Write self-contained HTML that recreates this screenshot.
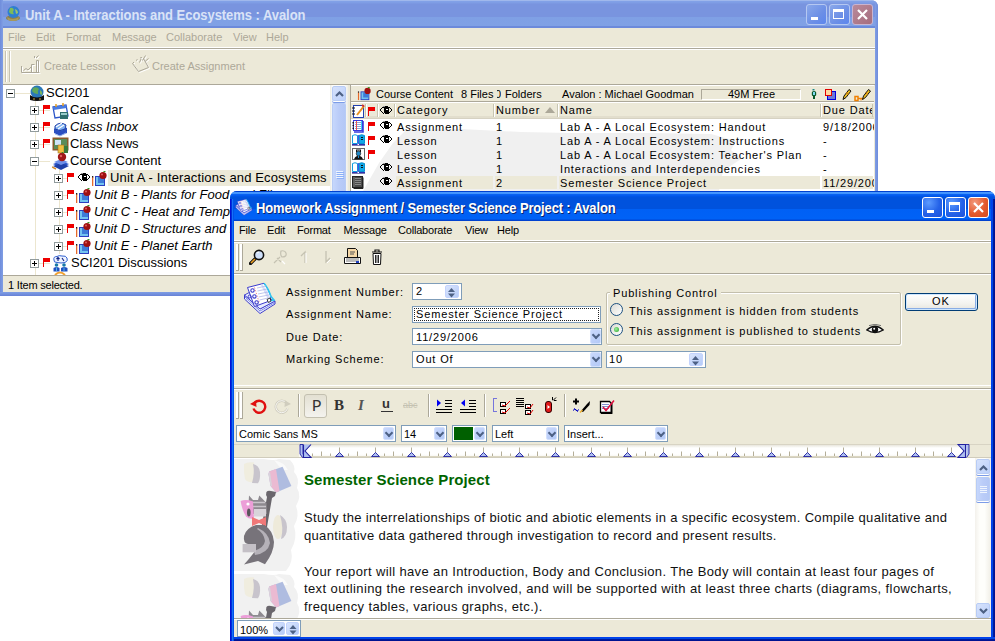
<!DOCTYPE html>
<html><head><meta charset="utf-8">
<style>
*{margin:0;padding:0;box-sizing:border-box}
html,body{width:995px;height:641px;overflow:hidden;background:#fff;font-family:"Liberation Sans",sans-serif;color:#000}
.a{position:absolute}
.nw{white-space:nowrap}
.t11{font-size:11px;line-height:13px}
.t13{font-size:13px;line-height:15px}
.beige{background:#ECE9D8}
.tbtn{position:absolute;width:21px;height:21px;border-radius:3px;border:1px solid #fff}
.sbtn{position:absolute;border-radius:2px;border:1px solid #B8CCF5;background:linear-gradient(135deg,#D6E2FC,#BCD0FA)}
.combo{position:absolute;background:#fff;border:1px solid #7F9DB9}
.dd{position:absolute;top:1px;right:1px;bottom:1px;width:11px;border-radius:2px;background:linear-gradient(135deg,#C9D8FC,#B3C9F7);border:1px solid #D3E0FD}
.dd:after{content:"";position:absolute;left:1.8px;top:1.8px;width:4px;height:4px;border-right:2.4px solid #4D6185;border-bottom:2.4px solid #4D6185;transform:rotate(45deg)}
.flag{position:absolute;width:8px;height:10px}
.flag:before{content:"";position:absolute;left:1px;top:1px;width:1px;height:9px;background:#E00}
.flag:after{content:"";position:absolute;left:1px;top:1px;width:7px;height:4px;background:#E00}
.xb{position:absolute;width:9px;height:9px;border:1px solid #919B9C;background:#fff}
.xb:before{content:"";position:absolute;left:1px;top:3px;width:5px;height:1px;background:#000}
.xb.p:after{content:"";position:absolute;left:3px;top:1px;width:1px;height:5px;background:#000}
</style></head><body>

<!-- ============ BACKGROUND WINDOW ============ -->
<div class="a" id="w1" style="left:0;top:0;width:878px;height:296px;background:#7A96DF;border-radius:0 7px 0 0;overflow:hidden">
  <div class="a" style="left:0;top:0;width:878px;height:28px;background:linear-gradient(to bottom,#A0B8EC 0,#A0B8EC 1px,#82A2E8 1px,#7E9CE4 3px,#7994DF 4px,#7994DF 17px,#7FA0E5 17px,#80A1E5 25.5px,#6C8ADB 26px,#6C8ADB 28px)"></div>
  <div class="a" style="left:0;top:0;width:3px;height:296px;background:linear-gradient(to right,#6F8CDB,#809EE4)"></div>
  <div class="a" style="left:875px;top:0;width:3px;height:296px;background:linear-gradient(to right,#809EE4,#6F8CDB)"></div>
  
  <!-- title icon globe -->
  <svg class="a" style="left:4px;top:4px" width="18" height="18" viewBox="0 0 18 18">
    <ellipse cx="9" cy="14" rx="7" ry="3" fill="#8C7E4E"/>
    <circle cx="9.5" cy="8" r="6" fill="#2F7FD0"/>
    <path d="M6 4 Q9 3 10 6 Q8 8 10 10 Q7 11 5 8Z" fill="#7DBB5A"/>
    <path d="M11 5 Q14 6 14 9 L12 10Z" fill="#9CC46A"/>
    <path d="M3 13 Q9 17 15 13 L14 16 Q9 18 4 16Z" fill="#A89B5E"/>
  </svg>
  <div class="a nw" style="left:25px;top:8px;font-weight:bold;font-size:13px;line-height:16px;color:#D9E3F7;letter-spacing:-0.05px;transform:scaleY(1.1);transform-origin:0 12px">Unit A - Interactions and Ecosystems : Avalon</div>
  <div class="tbtn" style="left:806px;top:4px;background:linear-gradient(135deg,#8AA8EA,#6C8FE6 60%,#5C86EE);border-color:#B5C8F2"><div class="a" style="left:4px;top:12px;width:7px;height:3px;background:#fff"></div></div>
  <div class="tbtn" style="left:829px;top:4px;background:linear-gradient(135deg,#8AA8EA,#6C8FE6 60%,#5C86EE);border-color:#B5C8F2"><div class="a" style="left:3px;top:4px;width:11px;height:10px;border:1px solid #fff;border-top-width:3px"></div></div>
  <div class="tbtn" style="left:852px;top:4px;background:linear-gradient(135deg,#B98A9A,#A66D7E);border-color:#C9B4CF">
    <svg class="a" style="left:3px;top:3px" width="13" height="13"><path d="M2 2L11 11M11 2L2 11" stroke="#fff" stroke-width="2.2"/></svg></div>
  <!-- client -->
  <div class="a beige" style="left:3px;top:28px;width:872px;height:264px">
    <!-- menu -->
    <div class="a nw t11" style="left:0;top:3px;width:872px;color:#ACA899">
      <span class="a" style="left:5px">File</span><span class="a" style="left:33px">Edit</span><span class="a" style="left:63px">Format</span><span class="a" style="left:109px">Message</span><span class="a" style="left:163px">Collaborate</span><span class="a" style="left:230px">View</span><span class="a" style="left:263px">Help</span>
    </div>
    <div class="a" style="left:0;top:19px;width:872px;height:1px;background:#fff"></div>
    <div class="a" style="left:0;top:20px;width:872px;height:1px;background:#ACA899"></div>
    <div class="a" style="left:0;top:21px;width:872px;height:1px;background:#fff"></div>
    <!-- toolbar -->
    <div class="a" style="left:2px;top:23px;width:2px;height:31px;border-left:1px solid #C5C2B2;background:#fff"></div>
    <div class="a" style="left:6px;top:23px;width:2px;height:31px;border-left:1px solid #C5C2B2;background:#fff"></div>
    <svg class="a" style="left:17px;top:27px" width="22" height="21" viewBox="0 0 22 21" fill="none"><path d="M1.5 17.5H19.5M1.5 11V17.5M3.5 15.5L6 13.5L8 15L11 12M11.5 17.5V9.5H14.5M16.5 17.5V5.5H18.5V17.5M16 3L18.5 0.5M14.5 1V3" stroke="#fff" stroke-width="1" transform="translate(1,1)"/><path d="M1.5 17.5H19.5M1.5 11V17.5M3.5 15.5L6 13.5L8 15L11 12M11.5 17.5V9.5H14.5M16.5 17.5V5.5H18.5V17.5M16 3L18.5 0.5M14.5 1V3" stroke="#ACA899" stroke-width="1"/></svg>
      <path d="M2 18H20M2 12V18M5 14L8 11L10 15L13 9M14 4V18H19V6M16 2L18 4" /></svg>
    <div class="a nw t11" style="left:41px;top:32px;color:#ACA899;font-size:11px">Create Lesson</div>
    <svg class="a" style="left:127px;top:27px" width="22" height="21" viewBox="0 0 22 21" fill="none"><path d="M2.5 8.5L8.5 16.5L18.5 12.5L13.5 3.5M2.5 8.5L4 7M6 5.5L7.5 4.5M10 3L12 2.5M12.5 5.5L15.5 0.5M15 6.5L18.5 3.5M9.5 7.5L11 4" stroke="#fff" stroke-width="1" transform="translate(1,1)"/><path d="M2.5 8.5L8.5 16.5L18.5 12.5L13.5 3.5M2.5 8.5L4 7M6 5.5L7.5 4.5M10 3L12 2.5M12.5 5.5L15.5 0.5M15 6.5L18.5 3.5M9.5 7.5L11 4" stroke="#ACA899" stroke-width="1"/></svg>
      <path d="M2 10L12 2L20 12L10 19Z M6 7L12 13 M9 5L15 11 M15 3L17 1 M18 5L20 4" /></svg>
    <div class="a nw t11" style="left:149px;top:32px;color:#ACA899;font-size:11px">Create Assignment</div>
    <div class="a" style="left:0;top:56px;width:872px;height:1px;background:#ACA899"></div>
    <!-- status -->
    <div class="a" style="left:0;top:247px;width:872px;height:1px;background:#ACA899"></div>
    <div class="a nw t11" style="left:5px;top:251px;font-size:11px;letter-spacing:-0.2px">1 Item selected.</div>
<div class="a" style="left:0;top:57px;width:327px;height:190px;background:#fff;overflow:hidden">
<div class="a" style="left:32px;top:8px;width:1px;height:190px;border-left:1px solid #ECE6CF"></div>
<div class="a" style="left:8px;top:8px;width:24px;height:1px;border-top:1px solid #ECE6CF"></div>
<div class="a" style="left:56px;top:84px;width:1px;height:85px;border-left:1px solid #ECE6CF"></div>
<div class="a" style="left:33px;top:25px;width:14px;height:1px;border-top:1px solid #ECE6CF"></div>
<div class="a" style="left:33px;top:42px;width:14px;height:1px;border-top:1px solid #ECE6CF"></div>
<div class="a" style="left:33px;top:59px;width:14px;height:1px;border-top:1px solid #ECE6CF"></div>
<div class="a" style="left:33px;top:76px;width:14px;height:1px;border-top:1px solid #ECE6CF"></div>
<div class="a" style="left:57px;top:93px;width:8px;height:1px;border-top:1px solid #ECE6CF"></div>
<div class="a" style="left:57px;top:110px;width:8px;height:1px;border-top:1px solid #ECE6CF"></div>
<div class="a" style="left:57px;top:127px;width:8px;height:1px;border-top:1px solid #ECE6CF"></div>
<div class="a" style="left:57px;top:144px;width:8px;height:1px;border-top:1px solid #ECE6CF"></div>
<div class="a" style="left:57px;top:161px;width:8px;height:1px;border-top:1px solid #ECE6CF"></div>
<div class="a" style="left:33px;top:178px;width:14px;height:1px;border-top:1px solid #ECE6CF"></div>
<div class="xb" style="left:3px;top:4px"></div>
<div class="xb p" style="left:27px;top:21px"></div>
<div class="xb p" style="left:27px;top:38px"></div>
<div class="xb p" style="left:27px;top:55px"></div>
<div class="xb" style="left:27px;top:72px"></div>
<div class="xb p" style="left:27px;top:174px"></div>
<div class="xb p" style="left:51px;top:89px"></div>
<div class="xb p" style="left:51px;top:106px"></div>
<div class="xb p" style="left:51px;top:123px"></div>
<div class="xb p" style="left:51px;top:140px"></div>
<div class="xb p" style="left:51px;top:157px"></div>
<div class="flag" style="left:39px;top:19px"></div>
<div class="flag" style="left:39px;top:36px"></div>
<div class="flag" style="left:39px;top:53px"></div>
<div class="flag" style="left:39px;top:172px"></div>
<div class="flag" style="left:63px;top:87px"></div>
<div class="flag" style="left:63px;top:104px"></div>
<div class="flag" style="left:63px;top:121px"></div>
<div class="flag" style="left:63px;top:138px"></div>
<div class="flag" style="left:63px;top:155px"></div>
<div class="a" style="left:105px;top:85px;width:223px;height:16px;background:#ECE9D8"></div>
<div class="a nw" style="left:43px;top:-1px;font-size:13px;line-height:17px;">SCI201</div>
<div class="a nw" style="left:67px;top:16px;font-size:13px;line-height:17px;">Calendar</div>
<div class="a nw" style="left:67px;top:33px;font-size:13px;line-height:17px;font-style:italic;">Class Inbox</div>
<div class="a nw" style="left:67px;top:50px;font-size:13px;line-height:17px;">Class News</div>
<div class="a nw" style="left:67px;top:67px;font-size:13px;line-height:17px;">Course Content</div>
<div class="a nw" style="left:107px;top:84px;font-size:13px;line-height:17px;letter-spacing:0.14px">Unit A - Interactions and Ecosystems</div>
<div class="a nw" style="left:91px;top:101px;font-size:13px;line-height:17px;font-style:italic;">Unit B - Plants for Food and Fibre</div>
<div class="a nw" style="left:91px;top:118px;font-size:13px;line-height:17px;font-style:italic;">Unit C - Heat and Temperature</div>
<div class="a nw" style="left:91px;top:135px;font-size:13px;line-height:17px;font-style:italic;">Unit D - Structures and Mechanisms</div>
<div class="a nw" style="left:91px;top:152px;font-size:13px;line-height:17px;font-style:italic;">Unit E - Planet Earth</div>
<div class="a nw" style="left:68px;top:169px;font-size:13px;line-height:17px;">SCI201 Discussions</div>
<svg class="a" style="left:26px;top:0px" width="16" height="17" viewBox="0 0 16 17">
<circle cx="8" cy="7" r="6.5" fill="#2A78B8"/><path d="M4 3Q8 1 10 4Q8 6 9 9Q5 9 3 6Z" fill="#5FA85A"/><path d="M11 5Q14 7 13 10L11 9Z" fill="#7DB35E"/>
<path d="M1 10Q8 15 15 10L15 15Q8 17 1 15Z" fill="#111"/><circle cx="5" cy="14" r="0.8" fill="#E8C040"/><circle cx="11" cy="14" r="0.8" fill="#E8C040"/></svg>
<svg class="a" style="left:49px;top:18px" width="17" height="17" viewBox="0 0 17 17">
<path d="M1 4L14 2L16 13L3 15Z" fill="#fff" stroke="#2B55C9" stroke-width="1.3"/><path d="M1 4L14 2L14.6 5L1.6 7Z" fill="#4A7BE0"/>
<rect x="8" y="9" width="8" height="7" fill="#2E6E6E"/><rect x="9" y="10" width="6" height="2" fill="#9CC"/><path d="M4 1V4M11 0V3" stroke="#E8A020" stroke-width="1.5"/></svg>
<svg class="a" style="left:49px;top:35px" width="17" height="17" viewBox="0 0 17 17">
<path d="M2 9L8 5L15 8L15 13L8 16L2 13Z" fill="#2B4FC0"/><path d="M3 6Q8 1 14 5L13 9Q8 12 3 9Z" fill="#7FB0F0" stroke="#1E3FA8"/><path d="M4 7L10 3M6 9L12 5" stroke="#fff" stroke-width="1.2"/>
<path d="M3 14L8 16L14 13" stroke="#9BB8F0" fill="none"/></svg>
<svg class="a" style="left:49px;top:52px" width="17" height="17" viewBox="0 0 17 17">
<rect x="0.5" y="0.5" width="16" height="13" fill="#8B5A2B"/><rect x="2" y="2" width="13" height="10" fill="#5A8C5A"/><rect x="3" y="3" width="6" height="5" fill="#CFE4F8"/>
<rect x="6" y="8" width="6" height="8" fill="#F0C040" stroke="#A07020" stroke-width="0.6"/><rect x="12" y="9" width="4" height="7" fill="#3A7A3A"/></svg>
<svg class="a" style="left:49px;top:67px" width="18" height="18" viewBox="0 0 18 18">
<path d="M1 12L9 9L17 12L9 16Z" fill="#2B55C9"/><path d="M1 14L9 11L17 14L9 18Z" fill="#1E3FA8"/><path d="M2 10L9 7L16 10L9 13Z" fill="#6E8FE8"/>
<circle cx="10" cy="5" r="4.2" fill="#A01818"/><circle cx="9" cy="4" r="1.2" fill="#E06060"/><path d="M10 1L11 0" stroke="#3A8A2A" stroke-width="1.2"/>
<path d="M0 15L4 17" stroke="#D08A30" stroke-width="1.5"/></svg>
<svg class="a" style="left:89px;top:86px" width="15" height="16" viewBox="0 0 15 16">
<rect x="0" y="6" width="1.3" height="9" fill="#E66A2A"/><rect x="0" y="5" width="1.3" height="1.5" fill="#222"/><rect x="3" y="5" width="10" height="10" fill="#2B3FC0"/><rect x="4" y="6" width="8" height="8" fill="#73C4F0"/><rect x="6" y="6" width="6" height="6" fill="#3E7BD8"/>
<circle cx="11" cy="4.5" r="3.6" fill="#A01010"/><circle cx="10" cy="3.5" r="1" fill="#E06060"/><path d="M11.5 1L13.5 0" stroke="#3A9A2A" stroke-width="1.3"/></svg>
<svg class="a" style="left:73px;top:103px" width="15" height="16" viewBox="0 0 15 16">
<rect x="0" y="6" width="1.3" height="9" fill="#E66A2A"/><rect x="0" y="5" width="1.3" height="1.5" fill="#222"/><rect x="3" y="5" width="10" height="10" fill="#2B3FC0"/><rect x="4" y="6" width="8" height="8" fill="#73C4F0"/><rect x="6" y="6" width="6" height="6" fill="#3E7BD8"/>
<circle cx="11" cy="4.5" r="3.6" fill="#A01010"/><circle cx="10" cy="3.5" r="1" fill="#E06060"/><path d="M11.5 1L13.5 0" stroke="#3A9A2A" stroke-width="1.3"/></svg>
<svg class="a" style="left:73px;top:120px" width="15" height="16" viewBox="0 0 15 16">
<rect x="0" y="6" width="1.3" height="9" fill="#E66A2A"/><rect x="0" y="5" width="1.3" height="1.5" fill="#222"/><rect x="3" y="5" width="10" height="10" fill="#2B3FC0"/><rect x="4" y="6" width="8" height="8" fill="#73C4F0"/><rect x="6" y="6" width="6" height="6" fill="#3E7BD8"/>
<circle cx="11" cy="4.5" r="3.6" fill="#A01010"/><circle cx="10" cy="3.5" r="1" fill="#E06060"/><path d="M11.5 1L13.5 0" stroke="#3A9A2A" stroke-width="1.3"/></svg>
<svg class="a" style="left:73px;top:137px" width="15" height="16" viewBox="0 0 15 16">
<rect x="0" y="6" width="1.3" height="9" fill="#E66A2A"/><rect x="0" y="5" width="1.3" height="1.5" fill="#222"/><rect x="3" y="5" width="10" height="10" fill="#2B3FC0"/><rect x="4" y="6" width="8" height="8" fill="#73C4F0"/><rect x="6" y="6" width="6" height="6" fill="#3E7BD8"/>
<circle cx="11" cy="4.5" r="3.6" fill="#A01010"/><circle cx="10" cy="3.5" r="1" fill="#E06060"/><path d="M11.5 1L13.5 0" stroke="#3A9A2A" stroke-width="1.3"/></svg>
<svg class="a" style="left:73px;top:154px" width="15" height="16" viewBox="0 0 15 16">
<rect x="0" y="6" width="1.3" height="9" fill="#E66A2A"/><rect x="0" y="5" width="1.3" height="1.5" fill="#222"/><rect x="3" y="5" width="10" height="10" fill="#2B3FC0"/><rect x="4" y="6" width="8" height="8" fill="#73C4F0"/><rect x="6" y="6" width="6" height="6" fill="#3E7BD8"/>
<circle cx="11" cy="4.5" r="3.6" fill="#A01010"/><circle cx="10" cy="3.5" r="1" fill="#E06060"/><path d="M11.5 1L13.5 0" stroke="#3A9A2A" stroke-width="1.3"/></svg>
<svg class="a" style="left:75px;top:88px" width="13" height="8" viewBox="0 0 13 8"><g fill="#000" shape-rendering="crispEdges"><rect x="5" y="0" width="3" height="1"/><rect x="2" y="1" width="8" height="1"/><rect x="1" y="2" width="1" height="1"/><rect x="0" y="3" width="1" height="2"/><rect x="1" y="5" width="1" height="1"/><rect x="2" y="6" width="1" height="1"/><rect x="3" y="7" width="1" height="1"/><rect x="10" y="2" width="1" height="1"/><rect x="11" y="3" width="1" height="2"/><rect x="10" y="5" width="1" height="1"/><rect x="9" y="6" width="1" height="1"/><rect x="8" y="7" width="1" height="1"/><rect x="4" y="2" width="5" height="5"/><rect x="5" y="7" width="3" height="1"/></g><rect x="6" y="3" width="2" height="1" fill="#fff" shape-rendering="crispEdges"/><rect x="3" y="0" width="2" height="1" fill="#999" shape-rendering="crispEdges"/></svg>
<svg class="a" style="left:49px;top:170px" width="17" height="17" viewBox="0 0 17 17"><path d="M2 5Q1 1.5 5 1.5Q7 0 10 1Q14 0.5 15 3Q16.5 6 13 7.5Q9 8.5 5 7.5Q1.5 7.5 2 5Z" fill="#EEF4FF" stroke="#3060D0" stroke-width="1"/><path d="M6 6V2.5M4.5 4L6 2.5L7.5 4M10 3L12 6" stroke="#102080" stroke-width="1.1" fill="none"/><circle cx="4.5" cy="10" r="1.8" fill="#1878A8"/><circle cx="12" cy="10" r="1.8" fill="#1878A8"/><path d="M1.5 16.5V13Q4.5 11 7.5 13V16.5Z" fill="#2050C0"/><path d="M9 16.5V13Q12 11 15.5 13V16.5Z" fill="#2050C0"/><path d="M4.5 12.5V16M12 12.5V16" stroke="#50B8E8"/></svg>


<svg class="a" style="left:51px;top:186px" width="12" height="4"><path d="M1 4Q6 -1 11 4" stroke="#F0A030" stroke-width="2" fill="none"/></svg>
</div>
<div class="a" style="left:327px;top:57px;width:18px;height:190px;background:linear-gradient(to right,#EEEDE5,#FEFEFB 15%,#FEFEFB 80%,#EEEDE5)">
  <div class="sbtn" style="left:2px;top:1px;width:14px;height:15px;box-shadow:0 1px 0 #fff,0 2px 0 #7C9CE8"><svg class="a" style="left:2px;top:3px" width="9" height="7"><path d="M1 6L4.5 2.5L8 6" stroke="#4D6185" stroke-width="2.2" fill="none"/></svg></div>
  <div class="sbtn" style="left:2px;top:18px;width:14px;height:172px;border-bottom:none;background:linear-gradient(to right,#C6D7FC,#BACCF8 50%,#B4C8F6)"><svg class="a" style="left:3px;top:67px" width="8" height="8"><path d="M0 0.5H7M0 2.5H7M0 4.5H7M0 6.5H7" stroke="#EEF4FE"/><path d="M1 1.5H8M1 3.5H8M1 5.5H8M1 7.5H8" stroke="#8CB0F8"/></svg></div>
</div>
<div class="a" style="left:348px;top:57px;width:523px;height:190px;background:#fff;overflow:hidden">
<div class="a" style="left:0;top:0;width:524px;height:17px;background:#ECE9D8;border-top:1px solid #fff;border-bottom:1px solid #ACA899"></div>
<svg class="a" style="left:5px;top:2px" width="17" height="14" viewBox="0 0 15 16">
<rect x="0" y="6" width="1.3" height="9" fill="#E66A2A"/><rect x="0" y="5" width="1.3" height="1.5" fill="#222"/><rect x="3" y="5" width="10" height="10" fill="#2B3FC0"/><rect x="4" y="6" width="8" height="8" fill="#73C4F0"/><rect x="6" y="6" width="6" height="6" fill="#3E7BD8"/>
<circle cx="11" cy="4.5" r="3.6" fill="#A01010"/><path d="M11.5 1L13.5 0" stroke="#3A9A2A" stroke-width="1.3"/></svg>
<div class="a nw" style="left:25px;top:3px;font-size:11px;line-height:13px;">Course Content</div>
<div class="a nw" style="left:110px;top:3px;font-size:11px;line-height:13px;">8 Files</div>
<div class="a nw" style="left:146px;top:3px;width:4px;overflow:hidden;font-size:11px;line-height:13px;"><span style="position:relative;left:-2px">0</span></div>
<div class="a nw" style="left:154px;top:3px;font-size:11px;line-height:13px;">Folders</div>
<div class="a nw" style="left:211px;top:3px;font-size:11px;line-height:13px;">Avalon : Michael Goodman</div>
<div class="a" style="left:350px;top:4px;width:100px;height:11px;border:1px solid #fff;border-top-color:#ACA899;border-left-color:#ACA899"></div>
<div class="a nw" style="left:377px;top:3px;font-size:11px;line-height:13px;">49M Free</div>
<svg class="a" style="left:459px;top:3px" width="62" height="14" viewBox="0 0 62 14">
<rect x="2.5" y="1" width="2" height="1.5" fill="#1A8A8A"/><path d="M1.8 4.5Q1.8 3 4 3Q6.2 3 6.2 4.5V7Q6.2 8 5 8V11H3V8Q1.8 8 1.8 7Z" fill="#0A5A2A"/><rect x="3" y="4" width="2" height="3" fill="#80D8F0"/>
<rect x="17.5" y="3.5" width="8" height="8" fill="#6A78D8" stroke="#0000E0"/>
<rect x="15.5" y="1.5" width="6" height="6" fill="#FFD8A0" stroke="#E00000"/>
<path d="M33 11.5L34 8L39 1.5L41 3L36 9.5Z" fill="#F0C020" stroke="#111" stroke-width="1"/><path d="M36 4.5L38.5 6.3" stroke="#E08000"/>
<path d="M45 8.5H48V12.5H45Z" fill="none" stroke="#F08000" stroke-width="1.5"/><path d="M48 10.5H54" stroke="#F08000" stroke-width="1.6"/><path d="M51 10.5V12.5" stroke="#F08000"/>
<path d="M52.5 11.5L53.5 8L58.5 1.5L60.5 3L55.5 9.5Z" fill="#F0C020" stroke="#111" stroke-width="1"/><path d="M55.5 4.5L58 6.3" stroke="#E08000"/>
</svg>
<div class="a" style="left:0;top:17px;width:524px;height:17px;background:#ECE9D8;border-bottom:1px solid #D6D2C2"></div>
<div class="a" style="left:0;top:17px;width:524px;height:1px;background:#fff"></div>
<div class="a" style="left:0;top:31px;width:524px;height:2px;background:#E2DECD"></div>
<div class="a" style="left:14px;top:19px;width:1px;height:13px;background:#C7C5B2"></div>
<div class="a" style="left:15px;top:19px;width:1px;height:13px;background:#fff"></div>
<div class="a" style="left:26px;top:19px;width:1px;height:13px;background:#C7C5B2"></div>
<div class="a" style="left:27px;top:19px;width:1px;height:13px;background:#fff"></div>
<div class="a" style="left:43px;top:19px;width:1px;height:13px;background:#C7C5B2"></div>
<div class="a" style="left:44px;top:19px;width:1px;height:13px;background:#fff"></div>
<div class="a" style="left:142px;top:19px;width:1px;height:13px;background:#C7C5B2"></div>
<div class="a" style="left:143px;top:19px;width:1px;height:13px;background:#fff"></div>
<div class="a" style="left:206px;top:19px;width:1px;height:13px;background:#C7C5B2"></div>
<div class="a" style="left:207px;top:19px;width:1px;height:13px;background:#fff"></div>
<div class="a" style="left:469px;top:19px;width:1px;height:13px;background:#C7C5B2"></div>
<div class="a" style="left:470px;top:19px;width:1px;height:13px;background:#fff"></div>
<svg class="a" style="left:1px;top:19px" width="13" height="14" viewBox="0 0 13 14">
<rect x="1.5" y="1.5" width="10" height="12" fill="#fff" stroke="#2040B0"/><path d="M0 4H3M0 7H3M0 10H3" stroke="#111" stroke-width="1.2"/><path d="M5 11L12 2" stroke="#E89020" stroke-width="2"/><path d="M10 1L12 2.5" stroke="#D03030" stroke-width="2"/></svg>
<div class="flag" style="left:16px;top:21px"></div>
<svg class="a" style="left:29px;top:21px" width="13" height="8" viewBox="0 0 13 8"><g fill="#000" shape-rendering="crispEdges"><rect x="5" y="0" width="3" height="1"/><rect x="2" y="1" width="8" height="1"/><rect x="1" y="2" width="1" height="1"/><rect x="0" y="3" width="1" height="2"/><rect x="1" y="5" width="1" height="1"/><rect x="2" y="6" width="1" height="1"/><rect x="3" y="7" width="1" height="1"/><rect x="10" y="2" width="1" height="1"/><rect x="11" y="3" width="1" height="2"/><rect x="10" y="5" width="1" height="1"/><rect x="9" y="6" width="1" height="1"/><rect x="8" y="7" width="1" height="1"/><rect x="4" y="2" width="5" height="5"/><rect x="5" y="7" width="3" height="1"/></g><rect x="6" y="3" width="2" height="1" fill="#fff" shape-rendering="crispEdges"/><rect x="3" y="0" width="2" height="1" fill="#999" shape-rendering="crispEdges"/></svg>
<div class="a nw" style="left:46px;top:18px;font-size:11px;line-height:14px;letter-spacing:0.85px;">Category</div>
<div class="a nw" style="left:145px;top:18px;font-size:11px;line-height:14px;letter-spacing:0.85px;">Number</div>
<svg class="a" style="left:194px;top:22px" width="10" height="6"><path d="M0 6L5 0L10 6Z" fill="#ACA899"/></svg>
<div class="a nw" style="left:209px;top:18px;font-size:11px;line-height:14px;letter-spacing:0.85px;">Name</div>
<div class="a nw" style="left:472px;top:18px;width:49px;overflow:hidden;font-size:11px;line-height:14px;letter-spacing:0.85px;">Due Date</div><div class="a" style="left:521px;top:19px;width:1px;height:13px;background:#C7C5B2"></div>
<svg class="a" style="left:0;top:34px" width="524" height="72" viewBox="0 0 524 72"><path d="M12 72 L28 44 L42 24 L55 11 L110 10 L170 13 L220 14 L300 14 L360 15 L385 22 L380 31 L390 40 L372 52 L368 72Z" fill="#F0F0F0"/></svg>
<div class="flag" style="left:16px;top:36px"></div>
<svg class="a" style="left:29px;top:36px" width="13" height="8" viewBox="0 0 13 8"><g fill="#000" shape-rendering="crispEdges"><rect x="5" y="0" width="3" height="1"/><rect x="2" y="1" width="8" height="1"/><rect x="1" y="2" width="1" height="1"/><rect x="0" y="3" width="1" height="2"/><rect x="1" y="5" width="1" height="1"/><rect x="2" y="6" width="1" height="1"/><rect x="3" y="7" width="1" height="1"/><rect x="10" y="2" width="1" height="1"/><rect x="11" y="3" width="1" height="2"/><rect x="10" y="5" width="1" height="1"/><rect x="9" y="6" width="1" height="1"/><rect x="8" y="7" width="1" height="1"/><rect x="4" y="2" width="5" height="5"/><rect x="5" y="7" width="3" height="1"/></g><rect x="6" y="3" width="2" height="1" fill="#fff" shape-rendering="crispEdges"/><rect x="3" y="0" width="2" height="1" fill="#999" shape-rendering="crispEdges"/></svg>
<div class="a nw" style="left:46px;top:35px;font-size:11px;line-height:14px;letter-spacing:0.85px;">Assignment</div>
<div class="a nw" style="left:145px;top:35px;font-size:11px;line-height:14px;letter-spacing:0.85px;">1</div>
<div class="a nw" style="left:209px;top:35px;font-size:11px;line-height:14px;letter-spacing:0.85px;">Lab A - A Local Ecosystem: Handout</div>
<div class="a nw" style="left:472px;top:35px;font-size:11px;line-height:14px;letter-spacing:0.85px;">9/18/2006</div>
<svg class="a" style="left:1px;top:35px" width="13" height="13" viewBox="0 0 13 13"><rect x="1.5" y="0.5" width="9" height="10" fill="#fff" stroke="#3A3ADC"/><path d="M11 1V12H2" stroke="#3A3ADC" stroke-width="1.6" fill="none"/><path d="M3 2.5H10M3 4.5H10M3 6.5H10M3 8.5H10" stroke="#8FA8D8"/><path d="M4.5 1V10" stroke="#F05050"/><path d="M9.5 1V10" stroke="#40C8F0"/><rect x="0.5" y="2" width="1.5" height="1.5" fill="#111"/><rect x="0.5" y="4.8" width="1.5" height="1.5" fill="#111"/><rect x="0.5" y="7.6" width="1.5" height="1.5" fill="#111"/></svg>
<div class="flag" style="left:16px;top:50px"></div>
<svg class="a" style="left:29px;top:50px" width="13" height="8" viewBox="0 0 13 8"><g fill="#000" shape-rendering="crispEdges"><rect x="5" y="0" width="3" height="1"/><rect x="2" y="1" width="8" height="1"/><rect x="1" y="2" width="1" height="1"/><rect x="0" y="3" width="1" height="2"/><rect x="1" y="5" width="1" height="1"/><rect x="2" y="6" width="1" height="1"/><rect x="3" y="7" width="1" height="1"/><rect x="10" y="2" width="1" height="1"/><rect x="11" y="3" width="1" height="2"/><rect x="10" y="5" width="1" height="1"/><rect x="9" y="6" width="1" height="1"/><rect x="8" y="7" width="1" height="1"/><rect x="4" y="2" width="5" height="5"/><rect x="5" y="7" width="3" height="1"/></g><rect x="6" y="3" width="2" height="1" fill="#fff" shape-rendering="crispEdges"/><rect x="3" y="0" width="2" height="1" fill="#999" shape-rendering="crispEdges"/></svg>
<div class="a nw" style="left:46px;top:49px;font-size:11px;line-height:14px;letter-spacing:0.85px;">Lesson</div>
<div class="a nw" style="left:145px;top:49px;font-size:11px;line-height:14px;letter-spacing:0.85px;">1</div>
<div class="a nw" style="left:209px;top:49px;font-size:11px;line-height:14px;letter-spacing:0.85px;">Lab A - A Local Ecosystem: Instructions</div>
<div class="a nw" style="left:472px;top:49px;font-size:11px;line-height:14px;letter-spacing:0.85px;">-</div>
<svg class="a" style="left:1px;top:49px" width="13" height="12" viewBox="0 0 13 12"><path d="M0.5 1.5Q3 0 5.5 1.5V9.5H0.5Z" fill="#fff" stroke="#10A0E0"/><path d="M7 1.5Q9.5 0 12.5 1.5V9.5H7Z" fill="#10A8E8" stroke="#0A90D0"/><path d="M9 3.5H11M9 5.5H11" stroke="#111"/><path d="M0 10.5H5.5M7 10.5H13" stroke="#3030B0" stroke-width="1.2"/><path d="M0 11.5H13" stroke="#202080" stroke-width="0.6"/><path d="M6.3 1V10" stroke="#3A3ADC"/></svg>
<div class="flag" style="left:16px;top:64px"></div>
<div class="a nw" style="left:46px;top:63px;font-size:11px;line-height:14px;letter-spacing:0.85px;">Lesson</div>
<div class="a nw" style="left:145px;top:63px;font-size:11px;line-height:14px;letter-spacing:0.85px;">1</div>
<div class="a nw" style="left:209px;top:63px;font-size:11px;line-height:14px;letter-spacing:0.85px;">Lab A - A Local Ecosystem: Teacher's Plan</div>
<div class="a nw" style="left:472px;top:63px;font-size:11px;line-height:14px;letter-spacing:0.85px;">-</div>
<svg class="a" style="left:1px;top:63px" width="13" height="12" viewBox="0 0 13 12"><rect x="0.5" y="0.5" width="12" height="11" fill="#fff" stroke="#666"/><path d="M4 2H9M4.5 2V4M8.5 2V4" stroke="#111"/><ellipse cx="6.5" cy="5.5" rx="2.2" ry="2.5" fill="#1E88C8" stroke="#111" stroke-width="0.7"/><path d="M2 11.5Q3 7.5 6.5 8Q10 7.5 11 11.5Z" fill="#111"/><path d="M6.5 8V10" stroke="#1E88C8"/></svg>
<svg class="a" style="left:29px;top:78px" width="13" height="8" viewBox="0 0 13 8"><g fill="#000" shape-rendering="crispEdges"><rect x="5" y="0" width="3" height="1"/><rect x="2" y="1" width="8" height="1"/><rect x="1" y="2" width="1" height="1"/><rect x="0" y="3" width="1" height="2"/><rect x="1" y="5" width="1" height="1"/><rect x="2" y="6" width="1" height="1"/><rect x="3" y="7" width="1" height="1"/><rect x="10" y="2" width="1" height="1"/><rect x="11" y="3" width="1" height="2"/><rect x="10" y="5" width="1" height="1"/><rect x="9" y="6" width="1" height="1"/><rect x="8" y="7" width="1" height="1"/><rect x="4" y="2" width="5" height="5"/><rect x="5" y="7" width="3" height="1"/></g><rect x="6" y="3" width="2" height="1" fill="#fff" shape-rendering="crispEdges"/><rect x="3" y="0" width="2" height="1" fill="#999" shape-rendering="crispEdges"/></svg>
<div class="a nw" style="left:46px;top:77px;font-size:11px;line-height:14px;letter-spacing:0.85px;">Lesson</div>
<div class="a nw" style="left:145px;top:77px;font-size:11px;line-height:14px;letter-spacing:0.85px;">1</div>
<div class="a nw" style="left:209px;top:77px;font-size:11px;line-height:14px;letter-spacing:0.85px;">Interactions and Interdependencies</div>
<div class="a nw" style="left:472px;top:77px;font-size:11px;line-height:14px;letter-spacing:0.85px;">-</div>
<svg class="a" style="left:1px;top:77px" width="13" height="12" viewBox="0 0 13 12"><path d="M0.5 1.5Q3 0 5.5 1.5V9.5H0.5Z" fill="#fff" stroke="#10A0E0"/><path d="M7 1.5Q9.5 0 12.5 1.5V9.5H7Z" fill="#10A8E8" stroke="#0A90D0"/><path d="M9 3.5H11M9 5.5H11" stroke="#111"/><path d="M0 10.5H5.5M7 10.5H13" stroke="#3030B0" stroke-width="1.2"/><path d="M0 11.5H13" stroke="#202080" stroke-width="0.6"/><path d="M6.3 1V10" stroke="#3A3ADC"/></svg>
<div class="a" style="left:45px;top:91px;width:97px;height:13px;background:#ECE9D8"></div>
<div class="a" style="left:144px;top:91px;width:62px;height:13px;background:#ECE9D8"></div>
<div class="a" style="left:208px;top:91px;width:261px;height:13px;background:#ECE9D8"></div>
<div class="a" style="left:471px;top:91px;width:51px;height:13px;background:#ECE9D8"></div>
<svg class="a" style="left:29px;top:92px" width="13" height="8" viewBox="0 0 13 8"><g fill="#000" shape-rendering="crispEdges"><rect x="5" y="0" width="3" height="1"/><rect x="2" y="1" width="8" height="1"/><rect x="1" y="2" width="1" height="1"/><rect x="0" y="3" width="1" height="2"/><rect x="1" y="5" width="1" height="1"/><rect x="2" y="6" width="1" height="1"/><rect x="3" y="7" width="1" height="1"/><rect x="10" y="2" width="1" height="1"/><rect x="11" y="3" width="1" height="2"/><rect x="10" y="5" width="1" height="1"/><rect x="9" y="6" width="1" height="1"/><rect x="8" y="7" width="1" height="1"/><rect x="4" y="2" width="5" height="5"/><rect x="5" y="7" width="3" height="1"/></g><rect x="6" y="3" width="2" height="1" fill="#fff" shape-rendering="crispEdges"/><rect x="3" y="0" width="2" height="1" fill="#999" shape-rendering="crispEdges"/></svg>
<div class="a nw" style="left:46px;top:91px;font-size:11px;line-height:14px;letter-spacing:0.85px;">Assignment</div>
<div class="a nw" style="left:145px;top:91px;font-size:11px;line-height:14px;letter-spacing:0.85px;">2</div>
<div class="a nw" style="left:209px;top:91px;font-size:11px;line-height:14px;letter-spacing:0.85px;">Semester Science Project</div>
<div class="a nw" style="left:472px;top:91px;font-size:11px;line-height:14px;letter-spacing:0.85px;">11/29/2006</div>
<svg class="a" style="left:1px;top:91px" width="12" height="13" viewBox="0 0 12 13"><rect x="0.5" y="0.5" width="10" height="11" fill="#4A4A4A" stroke="#222"/><path d="M11 1.5V12.5H1.5" stroke="#222" stroke-width="1" fill="none"/><path d="M3 2.5H9M3 4.5H9M3 6.5H9M3 8.5H9" stroke="#888"/><path d="M2 1V11" stroke="#777"/></svg>
</div>
    <!-- splitter -->
    <div class="a" style="left:347px;top:57px;width:1px;height:190px;background:#ACA899"></div>
  </div>
  <div class="a" style="left:0;top:292px;width:878px;height:4px;background:linear-gradient(to bottom,#7F9EE4,#6882D6)"></div>
</div>

<!-- ============ DIALOG ============ -->
<div class="a" id="w2" style="left:230px;top:191px;width:765px;height:450px;background:#0054E3;border-radius:7px 7px 0 0;overflow:hidden">
  <div class="a" style="left:0;top:0;width:765px;height:30px;background:linear-gradient(to bottom,#0040D0 0,#0040D0 1px,#4A9AFF 1px,#3D90FF 3px,#0A62F0 3.5px,#0058EE 5px,#0052DD 6px,#0052DD 17.5px,#0060F5 18.5px,#0062F6 28px,#0046D4 29px,#003ECB 30px)"></div>
  <div class="a" style="left:0;top:8px;width:4px;height:442px;background:linear-gradient(to right,#0010D8 0,#0010D8 1px,#0030D8 1px,#0030D8 2px,#1670F8 2px,#1670F8 3px,#0052E8 3px)"></div>
  <div class="a" style="left:761px;top:8px;width:4px;height:442px;background:linear-gradient(to right,#0040F0 0,#0040F0 1px,#0048E0 1px,#0048E0 2px,#001CA8 2px,#00108A 4px)"></div>
  <div class="a" style="left:4px;top:446px;width:761px;height:4px;background:linear-gradient(to bottom,#0040F0 0,#0040F0 1px,#0048E0 1px,#0048E0 2px,#001CA8 2px,#00108A 4px)"></div>
  <svg class="a" style="left:5px;top:7px" width="18" height="18" viewBox="3 3 34 34">
<path d="M4.5 17L20 31L35 23L35 26L20 35.5L4.5 21Z" fill="#fff" stroke="#3A3ACC" stroke-width="1"/>
<path d="M5 19L20 33L35 24.5" stroke="#5A6AE0" fill="none" stroke-width="0.8"/><path d="M6 21L20 34L34 26" stroke="#8FA0F0" fill="none" stroke-width="0.6" stroke-dasharray="1 1"/>
<path d="M4.5 17L12 13L35 23L20 31Z" fill="#E8ECFC" stroke="#3A3ACC" stroke-width="0.9"/>
<path d="M7.5 9.5L24 5.3Q28 10 31 18.5L29.5 23L14.5 28.5Z" fill="#fff" stroke="#3A3ACC" stroke-width="1"/>
<path d="M22 6Q27 12 30 19L29 23Q24 14 21 7Z" fill="#D8DCF8"/>
<path d="M24 5.3Q28 10 31 18.5L34 22L29.5 23" stroke="#30C8F0" stroke-width="1.6" fill="none"/>
<path d="M14.5 9.5L19.5 25.5" stroke="#F08080" stroke-dasharray="1.2 1.6" stroke-width="1"/>
<path d="M17 10L26 8M17.5 13L27 11M18 16L28 14M18.5 19L28.5 17M19.5 22L28 20" stroke="#B0B8E8" stroke-width="0.8"/>
<circle cx="12.5" cy="12.5" r="1.7" fill="none" stroke="#3A3ACC" stroke-width="1.1"/><circle cx="14.4" cy="18.4" r="1.7" fill="none" stroke="#3A3ACC" stroke-width="1.1"/><circle cx="16.6" cy="24.4" r="1.7" fill="none" stroke="#3A3ACC" stroke-width="1.1"/><circle cx="9.6" cy="18.5" r="1.5" fill="none" stroke="#3A3ACC" stroke-width="1"/>
<path d="M27 21.5L30 20L31 23L28.5 24.5Z" fill="#fff" stroke="#222" stroke-width="0.9"/>
</svg>
  <div class="a nw" style="left:26px;top:10px;font-weight:bold;font-size:13px;line-height:16px;color:#fff;letter-spacing:-0.15px;text-shadow:1px 1px 0 #0A246A;transform:scaleY(1.1);transform-origin:0 12px">Homework Assignment / Semester Science Project : Avalon</div>
  <div class="tbtn" style="left:692px;top:6px;background:radial-gradient(circle at 30% 25%,#5C9BFF,#2462E8 55%,#1D52DC);"><div class="a" style="left:4px;top:12px;width:7px;height:3px;background:#fff"></div></div>
  <div class="tbtn" style="left:715px;top:6px;background:radial-gradient(circle at 30% 25%,#5C9BFF,#2462E8 55%,#1D52DC);"><div class="a" style="left:3px;top:4px;width:11px;height:10px;border:1px solid #fff;border-top-width:3px"></div></div>
  <div class="tbtn" style="left:738px;top:6px;background:radial-gradient(circle at 30% 25%,#F39A7E,#E35A2E 55%,#D24A1E);">
    <svg class="a" style="left:3px;top:3px" width="13" height="13"><path d="M2 2L11 11M11 2L2 11" stroke="#fff" stroke-width="2.2"/></svg></div>
  <!-- client: page (234,221) -->
  <div class="a beige" id="c2" style="left:4px;top:30px;width:757px;height:416px;overflow:hidden">
<div class="a nw" style="left:5px;top:3px;font-size:11px;line-height:13px;letter-spacing:-0.2px;">File</div>
<div class="a nw" style="left:33px;top:3px;font-size:11px;line-height:13px;letter-spacing:-0.2px;">Edit</div>
<div class="a nw" style="left:63px;top:3px;font-size:11px;line-height:13px;letter-spacing:-0.2px;">Format</div>
<div class="a nw" style="left:109.5px;top:3px;font-size:11px;line-height:13px;letter-spacing:-0.2px;">Message</div>
<div class="a nw" style="left:164px;top:3px;font-size:11px;line-height:13px;letter-spacing:-0.2px;">Collaborate</div>
<div class="a nw" style="left:231px;top:3px;font-size:11px;line-height:13px;letter-spacing:-0.2px;">View</div>
<div class="a nw" style="left:263px;top:3px;font-size:11px;line-height:13px;letter-spacing:-0.2px;">Help</div>
<div class="a" style="left:0px;top:19px;width:757px;height:1px;background:#fff"></div>
<div class="a" style="left:0px;top:20px;width:757px;height:1px;background:#ACA899"></div>
<div class="a" style="left:0px;top:21px;width:757px;height:1px;background:#fff"></div>
<div class="a" style="left:2px;top:23px;width:3px;height:27px;background:#fff;border-right:1px solid #ACA899;border-bottom:1px solid #ACA899"></div>
<div class="a" style="left:6px;top:23px;width:3px;height:27px;background:#fff;border-right:1px solid #ACA899;border-bottom:1px solid #ACA899"></div>
<div class="a" style="left:0px;top:52px;width:757px;height:1px;background:#ACA899"></div>
<div class="a" style="left:0px;top:53px;width:757px;height:1px;background:#fff"></div>
<svg class="a" style="left:15px;top:28px" width="16" height="16" viewBox="0 0 16 16"><path d="M1.5 14.5L6 10" stroke="#111" stroke-width="3.2" stroke-linecap="round"/><path d="M2 14L6 10" stroke="#F0A020" stroke-width="1.6"/><circle cx="10" cy="6" r="4.6" fill="#CFE0FA" stroke="#111" stroke-width="1.6"/><path d="M8 4L10 3" stroke="#fff"/></svg>
<svg class="a" style="left:38px;top:28px" width="16" height="16" viewBox="0 0 16 16" fill="none" stroke="#C5C2B2" stroke-width="1.2"><path d="M2 14L8 8M9 2Q13 1 14 4Q15 8 10 8Q8 6 9 2Z M5 9L9 13" /><path d="M10 12L13 15" stroke="#fff"/></svg>
<svg class="a" style="left:65px;top:29px" width="8" height="14" viewBox="0 0 8 14"><path d="M6 13V2L2 6" stroke="#C5C2B2" stroke-width="1.3" fill="none"/><path d="M7 13V3" stroke="#fff"/></svg>
<svg class="a" style="left:90px;top:29px" width="8" height="14" viewBox="0 0 8 14"><path d="M2 1V12L6 8" stroke="#C5C2B2" stroke-width="1.3" fill="none"/><path d="M3 13L7 9" stroke="#fff"/></svg>
<svg class="a" style="left:110px;top:27px" width="17" height="16" viewBox="0 0 17 16"><path d="M3.5 0.5H11.5L13.5 2.5V9.5H3.5Z" fill="#F5D8A8" stroke="#111"/><path d="M6 4H11M6 6H10" stroke="#555"/><path d="M0.5 9.5H16.5V15.5H0.5Z" fill="#fff" stroke="#111"/><path d="M2 11H15M2 13H15" stroke="#777"/><rect x="12" y="13" width="3" height="2" fill="#2040C0"/></svg>
<svg class="a" style="left:137px;top:28px" width="12" height="16" viewBox="0 0 12 16"><path d="M1 3H11M4 3V1H8V3" stroke="#111" stroke-width="1.2" fill="none"/><path d="M2 4.5H10L9.5 15.5H2.5Z" fill="#fff" stroke="#111"/><path d="M4.5 6V14M6 6V14M7.5 6V14" stroke="#111" stroke-width="0.9"/></svg>
<svg class="a" style="left:6px;top:57px" width="40" height="40" viewBox="0 0 40 40">
<path d="M4.5 17L20 31L35 23L35 26L20 35.5L4.5 21Z" fill="#fff" stroke="#3A3ACC" stroke-width="1"/>
<path d="M5 19L20 33L35 24.5" stroke="#5A6AE0" fill="none" stroke-width="0.8"/><path d="M6 21L20 34L34 26" stroke="#8FA0F0" fill="none" stroke-width="0.6" stroke-dasharray="1 1"/>
<path d="M4.5 17L12 13L35 23L20 31Z" fill="#E8ECFC" stroke="#3A3ACC" stroke-width="0.9"/>
<path d="M7.5 9.5L24 5.3Q28 10 31 18.5L29.5 23L14.5 28.5Z" fill="#fff" stroke="#3A3ACC" stroke-width="1"/>
<path d="M22 6Q27 12 30 19L29 23Q24 14 21 7Z" fill="#D8DCF8"/>
<path d="M24 5.3Q28 10 31 18.5L34 22L29.5 23" stroke="#30C8F0" stroke-width="1.6" fill="none"/>
<path d="M14.5 9.5L19.5 25.5" stroke="#F08080" stroke-dasharray="1.2 1.6" stroke-width="1"/>
<path d="M17 10L26 8M17.5 13L27 11M18 16L28 14M18.5 19L28.5 17M19.5 22L28 20" stroke="#B0B8E8" stroke-width="0.8"/>
<circle cx="12.5" cy="12.5" r="1.7" fill="none" stroke="#3A3ACC" stroke-width="1.1"/><circle cx="14.4" cy="18.4" r="1.7" fill="none" stroke="#3A3ACC" stroke-width="1.1"/><circle cx="16.6" cy="24.4" r="1.7" fill="none" stroke="#3A3ACC" stroke-width="1.1"/><circle cx="9.6" cy="18.5" r="1.5" fill="none" stroke="#3A3ACC" stroke-width="1"/>
<path d="M27 21.5L30 20L31 23L28.5 24.5Z" fill="#fff" stroke="#222" stroke-width="0.9"/>
</svg>
<div class="a nw" style="left:52px;top:65px;font-size:11px;line-height:13px;letter-spacing:0.85px;">Assignment Number:</div>
<div class="a nw" style="left:52px;top:87px;font-size:11px;line-height:13px;letter-spacing:0.85px;">Assignment Name:</div>
<div class="a nw" style="left:52px;top:110px;font-size:11px;line-height:13px;letter-spacing:0.85px;">Due Date:</div>
<div class="a nw" style="left:52px;top:132px;font-size:11px;line-height:13px;letter-spacing:0.85px;">Marking Scheme:</div>
<div class="a" style="left:178px;top:62px;width:50px;height:17px;background:#fff;border:1px solid #7F9DB9"></div>
<div class="a nw" style="left:182px;top:64px;font-size:11px;line-height:13px;letter-spacing:0.85px;">2</div>
<div class="a" style="left:211px;top:64px;width:14px;height:13px;border-radius:2px;background:linear-gradient(135deg,#DAE5FD,#B5CBF8);border:1px solid #C3D3FD"><svg class="a" style="left:1px;top:0px" width="10" height="13"><path d="M1 6L4.5 2L8 6ZM1 7.5L8 7.5L4.5 11.5Z" fill="#4D6185"/></svg></div>
<div class="a" style="left:178px;top:85px;width:189px;height:17px;background:#fff;border:1px solid #7F9DB9"></div>
<div class="a" style="left:180px;top:87px;width:185px;height:13px;border:1px dotted #222"></div>
<div class="a nw" style="left:182px;top:87px;font-size:11px;line-height:13px;letter-spacing:0.85px;">Semester Science Project</div>
<div class="a" style="left:178px;top:107px;width:190px;height:17px;background:#fff;border:1px solid #7F9DB9"></div>
<div class="a nw" style="left:182px;top:110px;font-size:11px;line-height:13px;letter-spacing:0.85px;">11/29/2006</div>
<div class="a" style="left:178px;top:107px;width:190px;height:17px"><div class="dd"></div></div>
<div class="a" style="left:178px;top:130px;width:190px;height:17px;background:#fff;border:1px solid #7F9DB9"></div>
<div class="a nw" style="left:182px;top:132px;font-size:11px;line-height:13px;letter-spacing:0.85px;">Out Of</div>
<div class="a" style="left:178px;top:130px;width:190px;height:17px"><div class="dd"></div></div>
<div class="a" style="left:372px;top:130px;width:100px;height:17px;background:#fff;border:1px solid #7F9DB9"></div>
<div class="a nw" style="left:375px;top:132px;font-size:11px;line-height:13px;letter-spacing:0.85px;">10</div>
<div class="a" style="left:455px;top:132px;width:14px;height:13px;border-radius:2px;background:linear-gradient(135deg,#DAE5FD,#B5CBF8);border:1px solid #C3D3FD"><svg class="a" style="left:1px;top:0px" width="10" height="13"><path d="M1 6L4.5 2L8 6ZM1 7.5L8 7.5L4.5 11.5Z" fill="#4D6185"/></svg></div>
<div class="a" style="left:372px;top:71px;width:295px;height:53px;border:1px solid #C3BFAC;border-radius:2px;box-shadow:1px 1px 0 #fff, inset 1px 1px 0 #fff"></div>
<div class="a nw" style="left:376px;top:66px;font-size:11px;line-height:13px;letter-spacing:0.85px;background:#ECE9D8;padding:0 3px 0 3px">Publishing Control</div>
<div class="a" style="left:376px;top:82px;width:13px;height:13px;border-radius:50%;border:1px solid #1C5180;background:linear-gradient(135deg,#DCDBD3,#FFFFFF)"></div>
<div class="a" style="left:376px;top:102px;width:13px;height:13px;border-radius:50%;border:1px solid #1C5180;background:linear-gradient(135deg,#DCDBD3,#FFFFFF)"><div class="a" style="left:3px;top:3px;width:5px;height:5px;border-radius:50%;background:radial-gradient(circle at 40% 40%,#A0F0A0,#21A121)"></div></div>
<div class="a nw" style="left:395px;top:84px;font-size:11px;line-height:13px;letter-spacing:0.85px;">This assignment is hidden from students</div>
<div class="a nw" style="left:395px;top:104px;font-size:11px;line-height:13px;letter-spacing:0.85px;">This assignment is published to students</div>
<svg class="a" style="left:632px;top:103px" width="18" height="11" viewBox="0 0 18 11">
<path d="M0.8 6Q9 -1.5 17.2 6Q9 11 0.8 6Z" fill="#fff" stroke="#111" stroke-width="1.4"/><circle cx="9" cy="5.6" r="3.2" fill="#111"/><circle cx="8.2" cy="4.8" r="1" fill="#fff"/><path d="M3 1.6Q9 -1 15 1.6" stroke="#666" fill="none" stroke-width="0.9"/></svg>
<div class="a" style="left:671px;top:72px;width:73px;height:18px;border:1px solid #003C74;border-radius:3px;background:linear-gradient(to bottom,#FFFFFF,#F3F3EF 60%,#E6E5DE);box-shadow:inset 0 0 0 1px #CEE7FF, inset -1px -1px 0 1px #89ADE4"></div>
<div class="a nw" style="left:698px;top:74px;font-size:11px;line-height:13px;letter-spacing:0.85px;">OK</div>
<div class="a" style="left:0px;top:164px;width:757px;height:1px;background:#fff"></div>
<div class="a" style="left:0px;top:167px;width:757px;height:1px;background:#ACA899"></div>
<div class="a" style="left:0px;top:168px;width:757px;height:1px;background:#fff"></div>
<!--EDITOR-->
<div class="a" style="left:2px;top:171px;width:3px;height:27px;background:#fff;border-right:1px solid #ACA899;border-bottom:1px solid #ACA899"></div>
<div class="a" style="left:6px;top:171px;width:3px;height:27px;background:#fff;border-right:1px solid #ACA899;border-bottom:1px solid #ACA899"></div>
<div class="a" style="left:64px;top:173px;width:2px;height:23px;background:#ACA899;border-right:1px solid #fff"></div>
<div class="a" style="left:194px;top:173px;width:2px;height:23px;background:#ACA899;border-right:1px solid #fff"></div>
<div class="a" style="left:250px;top:173px;width:2px;height:23px;background:#ACA899;border-right:1px solid #fff"></div>
<div class="a" style="left:330px;top:173px;width:2px;height:23px;background:#ACA899;border-right:1px solid #fff"></div>
<svg class="a" style="left:16px;top:177px" width="17" height="16" viewBox="0 0 17 16"><path d="M4.5 5A6 6 0 1 1 3.5 10.5" stroke="#E01010" stroke-width="2.4" fill="none"/><path d="M0 6L6 2.5L6.5 9Z" fill="#E01010"/></svg>
<svg class="a" style="left:40px;top:177px" width="17" height="16" viewBox="0 0 17 16"><path d="M12.5 5A6 6 0 1 0 13.5 10.5" stroke="#D0CDBE" stroke-width="2.4" fill="none"/><path d="M12.5 5A6 6 0 1 0 13.5 10.5" stroke="#fff" stroke-width="0.8" fill="none"/><path d="M17 6L11 2.5L10.5 9Z" fill="#D0CDBE"/></svg>
<div class="a" style="left:70px;top:173px;width:23px;height:24px;border:1px solid #C3C0B0;border-radius:3px;background:linear-gradient(to bottom,#E3E0D2,#F4F3EE)"></div>
<div class="a nw" style="left:78px;top:177px;font-family:&quot;Liberation Mono&quot;,monospace;font-size:16px;line-height:19px;color:#333">P</div>
<div class="a nw" style="left:100px;top:176px;font-family:&quot;Liberation Serif&quot;,serif;font-weight:bold;font-size:15px;line-height:17px;color:#333">B</div>
<div class="a nw" style="left:124px;top:176px;font-family:&quot;Liberation Serif&quot;,serif;font-style:italic;font-weight:bold;font-size:15px;line-height:17px;color:#555">I</div>
<div class="a nw" style="left:148px;top:175px;font-family:&quot;Liberation Sans&quot;,sans-serif;font-weight:bold;font-size:13px;line-height:15px;color:#333">u</div>
<div class="a" style="left:147px;top:190px;width:12px;height:1px;background:#333"></div>
<div class="a nw" style="left:169px;top:179px;font-size:9px;line-height:10px;color:#C5C2B2;letter-spacing:0px;text-decoration:line-through">abc</div>
<svg class="a" style="left:202px;top:177px" width="17" height="16" viewBox="0 0 17 16"><path d="M1 1.5L5 5L1 8.5Z" fill="#0000F0"/><path d="M9 2.5H16M9 5.5H16M9 8.5H16M0 11.5H16M0 14.5H16" stroke="#000"/></svg>
<svg class="a" style="left:226px;top:177px" width="17" height="16" viewBox="0 0 17 16"><path d="M5 1.5L1 5L5 8.5Z" fill="#0000F0"/><path d="M9 2.5H16M9 5.5H16M9 8.5H16M0 11.5H16M0 14.5H16" stroke="#000"/></svg>
<svg class="a" style="left:258px;top:175px" width="19" height="20" viewBox="0 0 19 20"><path d="M4.5 2.5H1.5V15.5H4.5" stroke="#0000E0" stroke-dasharray="1 1" fill="none"/><rect x="8.5" y="6.5" width="5" height="4" fill="#fff" stroke="#000"/><rect x="8.5" y="13.5" width="5" height="4" fill="#fff" stroke="#000"/><path d="M10 9L13 10L18 5M10 16L13 17L18 12" stroke="#E00000" fill="none"/></svg>
<svg class="a" style="left:281px;top:175px" width="19" height="20" viewBox="0 0 19 20"><path d="M1 2.5H9M1 4.5H9M1 6.5H9M1 8.5H9M1 10.5H9" stroke="#000"/><rect x="10.5" y="8.5" width="5" height="4" fill="#fff" stroke="#000"/><rect x="10.5" y="14.5" width="5" height="4" fill="#fff" stroke="#000"/><path d="M12 11L15 12L18 8M12 17L15 18L18 14" stroke="#E00000" fill="none"/></svg>
<svg class="a" style="left:310px;top:175px" width="14" height="18" viewBox="0 0 14 18"><rect x="1.5" y="5.5" width="6" height="11" rx="2.5" fill="#E01818" stroke="#300"/><path d="M3.5 9L6 11L3.5 13Z" fill="#fff"/><path d="M8.5 1V4M9 4.5L12 1.5M10 4.5H12.5" stroke="#000"/></svg>
<svg class="a" style="left:338px;top:176px" width="19" height="17" viewBox="0 0 19 17"><path d="M1 4.5H7M4 1.5V7.5" stroke="#000" stroke-width="2"/><path d="M1 13.5Q3 11 4 13Q5 15 7 12.5" stroke="#0000C0" fill="none"/><path d="M2 11.5L6 14.5" stroke="#0000C0"/><path d="M9 14L15 7L18 4L17.5 8L11 15Z" fill="#000"/><path d="M8 15.5L10.5 13" stroke="#F0B030" stroke-width="1.5"/></svg>
<svg class="a" style="left:365px;top:178px" width="16" height="15" viewBox="0 0 16 15"><path d="M1.5 2.5H10.5L12.5 4.5V13.5H1.5Z" fill="#fff" stroke="#000" stroke-width="1.3"/><path d="M12.5 4V14H2" stroke="#000" stroke-width="1.8" fill="none"/><path d="M3 5.5H10M3 7.5H10M3 9.5H10" stroke="#8090D0"/><path d="M4 8L7 11.5L15 1.5" stroke="#E01040" stroke-width="1.6" fill="none"/></svg>
<div class="a" style="left:2px;top:204px;width:160px;height:17px;background:#fff;border:1px solid #7F9DB9"><div class="dd"></div></div>
<div class="a nw" style="left:5px;top:206px;font-size:11px;line-height:14px;">Comic Sans MS</div>
<div class="a" style="left:167px;top:204px;width:46px;height:17px;background:#fff;border:1px solid #7F9DB9"><div class="dd"></div></div>
<div class="a nw" style="left:170px;top:206px;font-size:11px;line-height:14px;">14</div>
<div class="a" style="left:218px;top:204px;width:35px;height:17px;background:#fff;border:1px solid #7F9DB9"><div class="dd"></div><div class="a" style="left:1px;top:1px;width:19px;height:13px;background:#006000"></div></div>
<div class="a" style="left:258px;top:204px;width:67px;height:17px;background:#fff;border:1px solid #7F9DB9"><div class="dd"></div></div>
<div class="a nw" style="left:261px;top:206px;font-size:11px;line-height:14px;">Left</div>
<div class="a" style="left:330px;top:204px;width:104px;height:17px;background:#fff;border:1px solid #7F9DB9"><div class="dd"></div></div>
<div class="a nw" style="left:333px;top:206px;font-size:11px;line-height:14px;">Insert...</div>
<div class="a" style="left:0px;top:223px;width:757px;height:14px;background:#ECE9D8"></div>
<div class="a" style="left:0px;top:223px;width:757px;height:1px;background:#D8D4C4"></div>
<div class="a" style="left:65px;top:224px;width:666px;height:12px;background:linear-gradient(to bottom,#E8E6DC,#FFFFFF 3px,#FFFFFF 9px,#F6F5F0)"></div>
<div class="a" style="left:0px;top:236px;width:757px;height:1px;background:#D0CCBC"></div>
<svg class="a" style="left:65px;top:224px" width="672" height="13" viewBox="0 0 672 13"><path d="M4 11.5H666" stroke="#DCD7C2"/><path d="M13.5 8.5V11" stroke="#B4AE98"/><path d="M22.5 6.5V11" stroke="#B4AE98"/><path d="M31.5 8.5V11" stroke="#B4AE98"/><path d="M40.5 2.5V8" stroke="#B4AE98"/><path d="M40.5 7.5L36.5 11.5H44.5Z" fill="#AFC0F0" stroke="#2020A0" stroke-width="0.9"/><path d="M49.5 8.5V11" stroke="#B4AE98"/><path d="M58.5 6.5V11" stroke="#B4AE98"/><path d="M67.5 8.5V11" stroke="#B4AE98"/><path d="M76.5 2.5V8" stroke="#B4AE98"/><path d="M76.5 7.5L72.5 11.5H80.5Z" fill="#AFC0F0" stroke="#2020A0" stroke-width="0.9"/><path d="M85.5 8.5V11" stroke="#B4AE98"/><path d="M94.5 6.5V11" stroke="#B4AE98"/><path d="M103.5 8.5V11" stroke="#B4AE98"/><path d="M112.5 2.5V8" stroke="#B4AE98"/><path d="M112.5 7.5L108.5 11.5H116.5Z" fill="#AFC0F0" stroke="#2020A0" stroke-width="0.9"/><path d="M121.5 8.5V11" stroke="#B4AE98"/><path d="M130.5 6.5V11" stroke="#B4AE98"/><path d="M139.5 8.5V11" stroke="#B4AE98"/><path d="M148.5 2.5V8" stroke="#B4AE98"/><path d="M148.5 7.5L144.5 11.5H152.5Z" fill="#AFC0F0" stroke="#2020A0" stroke-width="0.9"/><path d="M157.5 8.5V11" stroke="#B4AE98"/><path d="M166.5 6.5V11" stroke="#B4AE98"/><path d="M175.5 8.5V11" stroke="#B4AE98"/><path d="M184.5 2.5V8" stroke="#B4AE98"/><path d="M184.5 7.5L180.5 11.5H188.5Z" fill="#AFC0F0" stroke="#2020A0" stroke-width="0.9"/><path d="M193.5 8.5V11" stroke="#B4AE98"/><path d="M202.5 6.5V11" stroke="#B4AE98"/><path d="M211.5 8.5V11" stroke="#B4AE98"/><path d="M220.5 2.5V8" stroke="#B4AE98"/><path d="M220.5 7.5L216.5 11.5H224.5Z" fill="#AFC0F0" stroke="#2020A0" stroke-width="0.9"/><path d="M229.5 8.5V11" stroke="#B4AE98"/><path d="M238.5 6.5V11" stroke="#B4AE98"/><path d="M247.5 8.5V11" stroke="#B4AE98"/><path d="M256.5 2.5V8" stroke="#B4AE98"/><path d="M256.5 7.5L252.5 11.5H260.5Z" fill="#AFC0F0" stroke="#2020A0" stroke-width="0.9"/><path d="M265.5 8.5V11" stroke="#B4AE98"/><path d="M274.5 6.5V11" stroke="#B4AE98"/><path d="M283.5 8.5V11" stroke="#B4AE98"/><path d="M292.5 2.5V8" stroke="#B4AE98"/><path d="M292.5 7.5L288.5 11.5H296.5Z" fill="#AFC0F0" stroke="#2020A0" stroke-width="0.9"/><path d="M301.5 8.5V11" stroke="#B4AE98"/><path d="M310.5 6.5V11" stroke="#B4AE98"/><path d="M319.5 8.5V11" stroke="#B4AE98"/><path d="M328.5 2.5V8" stroke="#B4AE98"/><path d="M328.5 7.5L324.5 11.5H332.5Z" fill="#AFC0F0" stroke="#2020A0" stroke-width="0.9"/><path d="M337.5 8.5V11" stroke="#B4AE98"/><path d="M346.5 6.5V11" stroke="#B4AE98"/><path d="M355.5 8.5V11" stroke="#B4AE98"/><path d="M364.5 2.5V8" stroke="#B4AE98"/><path d="M364.5 7.5L360.5 11.5H368.5Z" fill="#AFC0F0" stroke="#2020A0" stroke-width="0.9"/><path d="M373.5 8.5V11" stroke="#B4AE98"/><path d="M382.5 6.5V11" stroke="#B4AE98"/><path d="M391.5 8.5V11" stroke="#B4AE98"/><path d="M400.5 2.5V8" stroke="#B4AE98"/><path d="M400.5 7.5L396.5 11.5H404.5Z" fill="#AFC0F0" stroke="#2020A0" stroke-width="0.9"/><path d="M409.5 8.5V11" stroke="#B4AE98"/><path d="M418.5 6.5V11" stroke="#B4AE98"/><path d="M427.5 8.5V11" stroke="#B4AE98"/><path d="M436.5 2.5V8" stroke="#B4AE98"/><path d="M436.5 7.5L432.5 11.5H440.5Z" fill="#AFC0F0" stroke="#2020A0" stroke-width="0.9"/><path d="M445.5 8.5V11" stroke="#B4AE98"/><path d="M454.5 6.5V11" stroke="#B4AE98"/><path d="M463.5 8.5V11" stroke="#B4AE98"/><path d="M472.5 2.5V8" stroke="#B4AE98"/><path d="M472.5 7.5L468.5 11.5H476.5Z" fill="#AFC0F0" stroke="#2020A0" stroke-width="0.9"/><path d="M481.5 8.5V11" stroke="#B4AE98"/><path d="M490.5 6.5V11" stroke="#B4AE98"/><path d="M499.5 8.5V11" stroke="#B4AE98"/><path d="M508.5 2.5V8" stroke="#B4AE98"/><path d="M508.5 7.5L504.5 11.5H512.5Z" fill="#AFC0F0" stroke="#2020A0" stroke-width="0.9"/><path d="M517.5 8.5V11" stroke="#B4AE98"/><path d="M526.5 6.5V11" stroke="#B4AE98"/><path d="M535.5 8.5V11" stroke="#B4AE98"/><path d="M544.5 2.5V8" stroke="#B4AE98"/><path d="M544.5 7.5L540.5 11.5H548.5Z" fill="#AFC0F0" stroke="#2020A0" stroke-width="0.9"/><path d="M553.5 8.5V11" stroke="#B4AE98"/><path d="M562.5 6.5V11" stroke="#B4AE98"/><path d="M571.5 8.5V11" stroke="#B4AE98"/><path d="M580.5 2.5V8" stroke="#B4AE98"/><path d="M580.5 7.5L576.5 11.5H584.5Z" fill="#AFC0F0" stroke="#2020A0" stroke-width="0.9"/><path d="M589.5 8.5V11" stroke="#B4AE98"/><path d="M598.5 6.5V11" stroke="#B4AE98"/><path d="M607.5 8.5V11" stroke="#B4AE98"/><path d="M616.5 2.5V8" stroke="#B4AE98"/><path d="M616.5 7.5L612.5 11.5H620.5Z" fill="#AFC0F0" stroke="#2020A0" stroke-width="0.9"/><path d="M625.5 8.5V11" stroke="#B4AE98"/><path d="M634.5 6.5V11" stroke="#B4AE98"/><path d="M643.5 8.5V11" stroke="#B4AE98"/><path d="M652.5 2.5V8" stroke="#B4AE98"/><path d="M652.5 7.5L648.5 11.5H656.5Z" fill="#AFC0F0" stroke="#2020A0" stroke-width="0.9"/></svg>
<svg class="a" style="left:65px;top:223px" width="13" height="14" viewBox="0 0 13 14"><path d="M1 0.5H4V10L6.5 13.5H3.5L1 10Z" fill="#AFC0F0" stroke="#2020A0" stroke-width="0.9"/><path d="M4.5 0.5V13.5H12L6 7L12 0.5" fill="#AFC0F0" stroke="#2020A0" stroke-width="1.1"/></svg>
<svg class="a" style="left:723px;top:223px" width="13" height="14" viewBox="0 0 13 14"><path d="M1 0.5L7 7L1 13.5H8.5V0.5Z" fill="#AFC0F0" stroke="#2020A0" stroke-width="1.1"/><path d="M9 0.5H12V10L9.5 13.5" fill="#AFC0F0" stroke="#2020A0" stroke-width="0.9"/></svg>
<div class="a" style="left:0px;top:237px;width:741px;height:160px;background:#fff;overflow:hidden"><svg class="a" style="left:0;top:0" width="80" height="160" viewBox="0 0 80 160">
<defs><pattern id="tile" patternUnits="userSpaceOnUse" width="80" height="115">
<path d="M0 1 L30 1 Q40 3 45 1 L56 2 Q62 8 60 14 Q66 20 63 30 Q68 38 62 48 Q66 58 60 68 Q64 80 57 92 Q60 104 52 113 L0 113Z" fill="#F1F1F1"/>
<path d="M40 2 Q50 4 54 12 L48 12Z" fill="#FAFAFA"/>
<path d="M10 6 Q14 3.5 20 4.5 L20.5 24 Q14 25 11 21 Q9.5 14 10 6Z" fill="#F0EDDF"/>
<path d="M19 6 Q25 7 26 14 Q26.5 22 24 25.3 L18 25 Q21 15 19 6Z" fill="#C8C4CC"/>
<path d="M34.5 16 L35.2 13.4 L48.6 8.8 L57.4 28.1 L42.2 34.5 L36.6 28.1Z" fill="#AFBCE0"/>
<path d="M34.5 16 L35.2 13.4 L42 11 L45.5 33 L42.2 34.5 L36.6 28.1Z" fill="#EBBAD2"/>
<path d="M34.5 16 L36 13.6 L38 28 L36.6 28.1Z" fill="#D8D4DC"/>
<path d="M32.4 34 Q34 32 37 33 L42 34 L41 38 L38 40 L33 69 L27.5 69 L33 39 Q31.5 37 32.4 34Z" fill="#6A666C"/>
<path d="M14 56 L15 37.5 L19 42 L24 42 L25.3 37.5 L32.5 45 L33 56Z" fill="#8E8A90"/>
<path d="M18 44.5H31M18 48.5H32" stroke="#C8C4CA" stroke-width="1.5"/>
<path d="M20 51 H32 V58.5 H20Z" fill="#D8D4DA"/>
<path d="M6.6 43 Q12 41 19 43.5 L20 60.5 Q15 61.5 12 58.5 Q8 52 6.6 43Z" fill="#EC9ED8"/>
<circle cx="14" cy="46" r="1.6" fill="#fff"/>
<ellipse cx="14.8" cy="54.5" rx="1.8" ry="4" fill="#5A565C"/>
<path d="M18 59 L25 62 L32 59 L32 68 L25 65 L18 68Z" fill="#F07878"/>
<path d="M22 67 Q12 70 10 78 Q9 85 14 86 L22 86 L22 92 L14 102 L10 106.5 L24 103 L31 106.3 Q40 94 40 84 Q39 72 30 67Z" fill="#77737A"/>
<path d="M24 70 Q35 75 36 85 Q34 95 21 97 L20 93 Q30 90 31 83 Q30 75 23 71Z" fill="#B5B1B8"/>
<path d="M8.6 86 H22 V94.3 H8.6Z" fill="#C4C0C6"/>
<ellipse cx="44" cy="69" rx="5" ry="12" fill="#EEEADA"/>
<path d="M46 57 Q53 61 53 69 Q53 79 47 81 Q50 70 46 57Z" fill="#C8C4CC"/>
</pattern></defs>
<rect x="0" y="0" width="80" height="160" fill="url(#tile)"/>
</svg></div>
<div class="a" style="left:741px;top:237px;width:16px;height:160px;background:linear-gradient(to right,#F3F1EC,#FEFEFB 30%,#FEFEFB 60%,#F0EEE6)"></div>
<div class="a" style="left:742px;top:238px;width:14px;height:15px;box-shadow:0 1px 0 #fff,0 2px 0 #7C9CE8;border-radius:2px;border:1px solid #B8CCF5;background:linear-gradient(135deg,#D6E2FC,#BCD0FA)"><svg class="a" style="left:2px;top:4px" width="9" height="7"><path d="M1 6L4.5 2.5L8 6" stroke="#4D6185" stroke-width="2.2" fill="none"/></svg></div>
<div class="a" style="left:742px;top:256px;width:14px;height:24px;box-shadow:0 1px 0 #fff,0 2px 0 #7C9CE8;border-radius:2px;border:1px solid #B8CCF5;background:linear-gradient(to right,#C6D7FC,#BACCF8 50%,#B4C8F6)"><svg class="a" style="left:3px;top:8px" width="8" height="8"><path d="M0 0.5H7M0 2.5H7M0 4.5H7M0 6.5H7" stroke="#EEF4FE"/></svg></div>
<div class="a" style="left:742px;top:382px;width:14px;height:15px;border-radius:2px;border:1px solid #B8CCF5;background:linear-gradient(135deg,#D6E2FC,#BCD0FA)"><svg class="a" style="left:2px;top:4px" width="9" height="7"><path d="M1 1L4.5 4.5L8 1" stroke="#4D6185" stroke-width="2.2" fill="none"/></svg></div>
<div class="a nw" style="left:70px;top:250px;font-weight:bold;font-size:15px;line-height:18px;color:#006400;letter-spacing:0.1px">Semester Science Project</div>
<div class="a nw" style="left:70px;top:288px;font-size:13px;line-height:18px;color:#111;letter-spacing:0.33px">Study the interrelationships of biotic and abiotic elements in a specific ecosystem. Compile qualitative and</div>
<div class="a nw" style="left:70px;top:306px;font-size:13px;line-height:18px;color:#111;letter-spacing:0.33px">quantitative data gathered through investigation to record and present results.</div>
<div class="a nw" style="left:70px;top:342px;font-size:13px;line-height:18px;color:#111;letter-spacing:0.37px">Your report will have an Introduction, Body and Conclusion. The Body will contain at least four pages of</div>
<div class="a nw" style="left:70px;top:359px;font-size:13px;line-height:18px;color:#111;letter-spacing:0.39px">text outlining the research involved, and will be supported with at least three charts (diagrams, flowcharts,</div>
<div class="a nw" style="left:70px;top:377px;font-size:13px;line-height:18px;color:#111;letter-spacing:0.37px">frequency tables, various graphs, etc.).</div>
<div class="a" style="left:0px;top:397px;width:757px;height:1px;background:#ACA899"></div><div class="a" style="left:0px;top:398px;width:757px;height:1px;background:#fff"></div>
<div class="a" style="left:3px;top:399px;width:64px;height:17px;background:#fff;border:1px solid #7F9DB9"></div>
<div class="a nw" style="left:6px;top:402px;font-size:11px;line-height:14px;">100%</div>
<div class="a" style="left:39px;top:401px;width:12px;height:13px;border-radius:2px;background:linear-gradient(135deg,#DAE5FD,#B5CBF8);border:1px solid #C3D3FD"><svg class="a" style="left:1px;top:2px" width="9" height="8"><path d="M1 2L4.5 5.5L8 2" stroke="#4D6185" stroke-width="2" fill="none"/></svg></div>
<div class="a" style="left:52px;top:401px;width:13px;height:13px;border-radius:2px;background:linear-gradient(135deg,#DAE5FD,#B5CBF8);border:1px solid #C3D3FD"><svg class="a" style="left:1px;top:0px" width="10" height="13"><path d="M1.5 6L5 2L8.5 6ZM1.5 7.5L8.5 7.5L5 11.5Z" fill="#4D6185"/></svg></div>
<!--end-c2-->
  </div>
</div>
</body></html>
